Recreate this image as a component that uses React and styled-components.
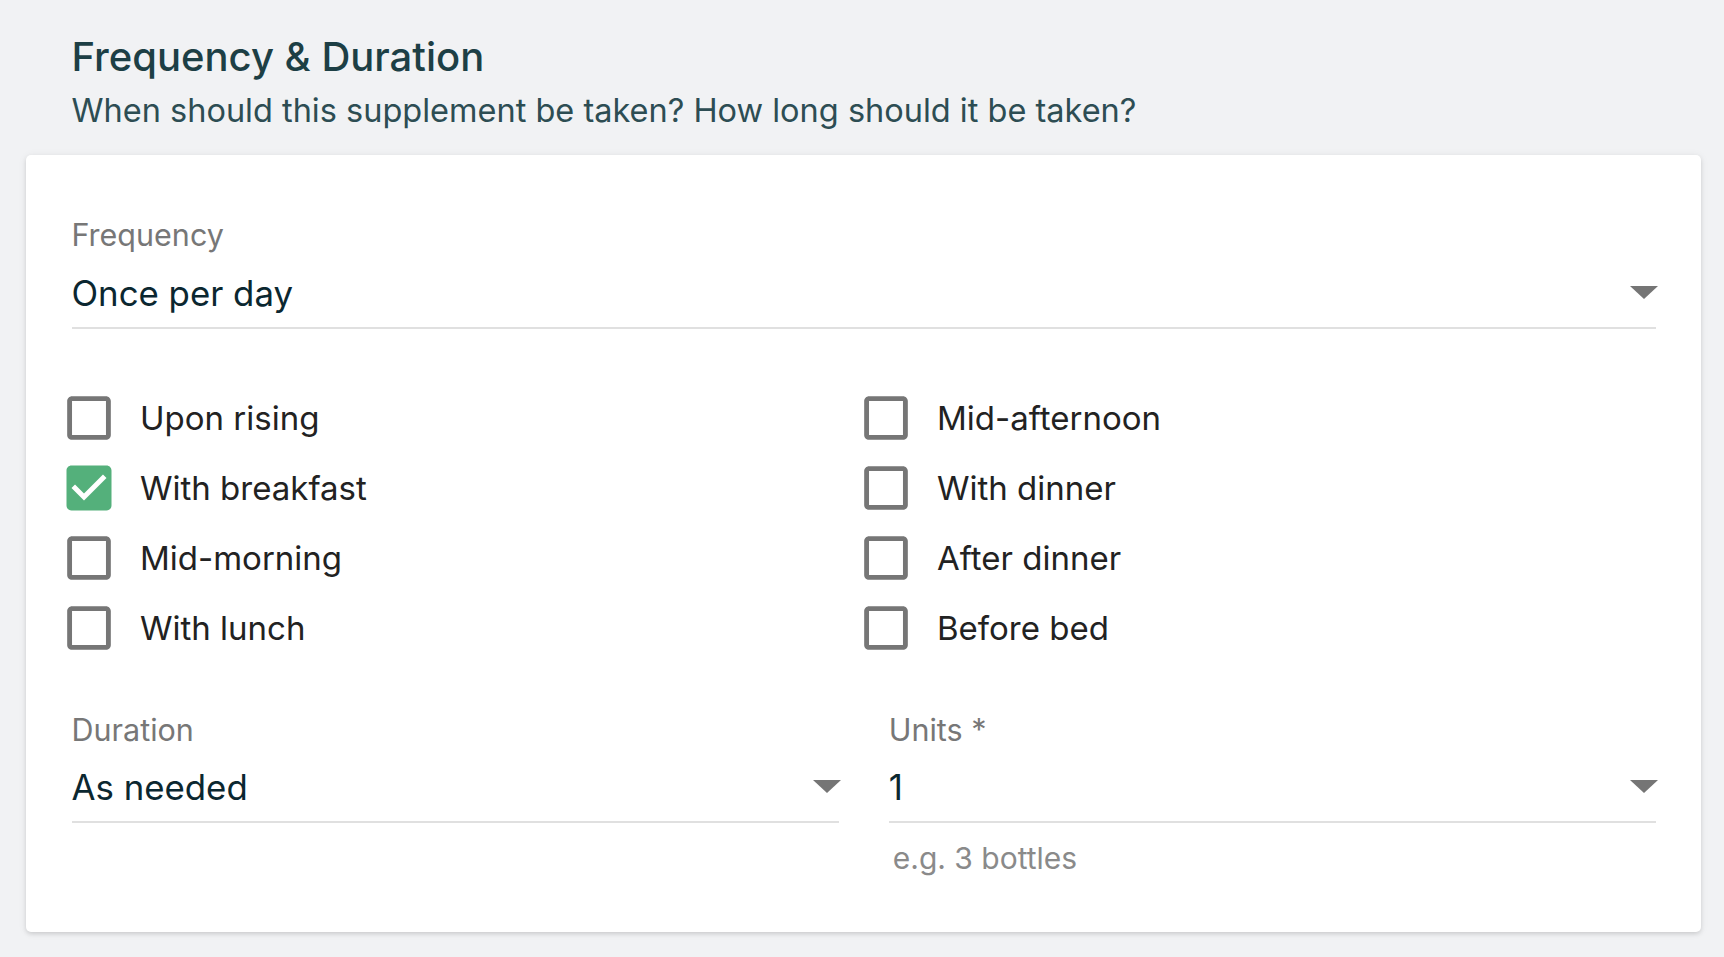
import React from 'react';
import styled, { createGlobalStyle } from 'styled-components';

const GlobalStyle = createGlobalStyle`
  html, body {
    margin: 0;
    padding: 0;
    background: #f1f2f4;
    min-height: 100vh;
  }
  body {
    font-family: Inter, 'Noto Sans', 'Liberation Sans', sans-serif;
    -webkit-font-smoothing: antialiased;
  }
`;

const Page = styled.div`
  padding: 33px 23px 25px 26px;
`;

const Header = styled.header`
  padding-left: 45.5px;
  margin-bottom: 24px;
`;

const Title = styled.h1`
  margin: 0;
  font-size: 40px;
  line-height: 48px;
  font-weight: 500;
  color: #1d3f45;
`;

const Subtitle = styled.p`
  margin: 10px 0 0;
  font-size: 32.5px;
  line-height: 40px;
  font-weight: 400;
  color: #2d4d53;
`;

const Card = styled.section`
  background: #fff;
  border-radius: 5px;
  box-shadow: 0 2px 4px rgba(0, 0, 0, 0.12), 0 1px 10px rgba(0, 0, 0, 0.06);
  padding: 61.5px 45px 55.5px 45.5px;
`;

const Field = styled.div`
  display: flex;
  flex-direction: column;
`;

const Label = styled.label`
  font-size: 30.5px;
  line-height: 36px;
  color: #777;
`;

const Select = styled.div`
  margin-top: ${p => p.$gap}px;
  padding-bottom: ${p => p.$pad}px;
  border-bottom: 2px solid #e0e0e0;
  display: flex;
  align-items: center;
  justify-content: space-between;
`;

const Value = styled.span`
  font-size: 34.8px;
  line-height: 44px;
  color: #0b2730;
`;

const Arrow = styled.span`
  width: 0;
  height: 0;
  border-left: 14px solid transparent;
  border-right: 14px solid transparent;
  border-top: 13px solid #757575;
  margin-right: -2px;
`;

const CheckGrid = styled.div`
  display: grid;
  grid-template-columns: 797px 1fr;
  grid-auto-flow: column;
  grid-template-rows: repeat(4, 70px);
  margin: 53.5px 0 49px -13px;
`;

const CheckRow = styled.label`
  display: flex;
  align-items: center;
  cursor: pointer;
`;

const CheckText = styled.span`
  margin-left: 21.5px;
  font-size: 33px;
  line-height: 40px;
  color: #222;
`;

const Fields = styled.div`
  display: grid;
  grid-template-columns: 1fr 1fr;
  column-gap: 50px;
  align-items: start;
`;

const Helper = styled.span`
  margin: 17px 0 0 4px;
  font-size: 30px;
  line-height: 36px;
  color: #8a8a8a;
`;

const BoxIcon = ({ checked }) => (
  <svg width="60" height="60" viewBox="0 0 24 24">
    {checked ? (
      <path
        fill="#54b07b"
        d="M19 3H5c-1.11 0-2 .9-2 2v14c0 1.1.89 2 2 2h14c1.11 0 2-.9 2-2V5c0-1.1-.89-2-2-2zm-9 14l-5-5 1.41-1.41L10 14.17l7.59-7.59L19 8l-9 9z"
      />
    ) : (
      <path
        fill="#767676"
        d="M19 5v14H5V5h14m0-2H5c-1.1 0-2 .9-2 2v14c0 1.1.9 2 2 2h14c1.1 0 2-.9 2-2V5c0-1.1-.9-2-2-2z"
        transform="translate(12 12) scale(0.97) translate(-12 -12)"
      />
    )}
  </svg>
);

const times = [
  { label: 'Upon rising', checked: false },
  { label: 'With breakfast', checked: true },
  { label: 'Mid-morning', checked: false },
  { label: 'With lunch', checked: false },
  { label: 'Mid-afternoon', checked: false },
  { label: 'With dinner', checked: false },
  { label: 'After dinner', checked: false },
  { label: 'Before bed', checked: false },
];

const App = () => {
  return (
    <>
      <GlobalStyle />
      <Page>
        <Header>
          <Title>Frequency &amp; Duration</Title>
          <Subtitle>When should this supplement be taken? How long should it be taken?</Subtitle>
        </Header>
        <Card>
          <Field>
            <Label>Frequency</Label>
            <Select $gap={18} $pad={12.5}>
              <Value>Once per day</Value>
              <Arrow />
            </Select>
          </Field>

          <CheckGrid>
            {times.map(t => (
              <CheckRow key={t.label}>
                <BoxIcon checked={t.checked} />
                <CheckText>{t.label}</CheckText>
              </CheckRow>
            ))}
          </CheckGrid>

          <Fields>
            <Field>
              <Label>Duration</Label>
              <Select $gap={17} $pad={12.5}>
                <Value>As needed</Value>
                <Arrow />
              </Select>
            </Field>
            <Field>
              <Label>Units *</Label>
              <Select $gap={17} $pad={12.5}>
                <Value>1</Value>
                <Arrow />
              </Select>
              <Helper>e.g. 3 bottles</Helper>
            </Field>
          </Fields>
        </Card>
      </Page>
    </>
  );
};

export default App;
